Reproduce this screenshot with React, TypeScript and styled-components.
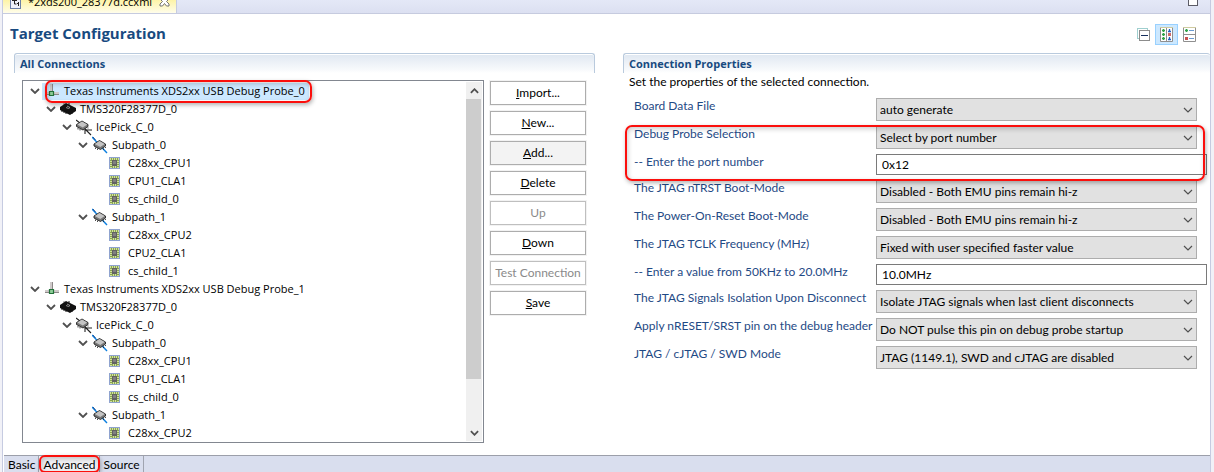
import React, { Fragment, ReactNode } from 'react';
import styled, { createGlobalStyle, css } from 'styled-components';

const ui = `'Open Sans', 'Noto Sans', sans-serif`;
const form = `Lato, 'Open Sans', sans-serif`;

const GlobalStyle = createGlobalStyle`
  *, *::before, *::after { box-sizing: border-box; }
  body { margin: 0; background: #f1f1f7; font: 11px/16px ${ui}; color: #000; }
  button, input, select { font: inherit; color: inherit; margin: 0; border-radius: 0; }
`;

const Editor = styled.main`
  display: flex;
  flex-direction: column;
  min-height: 100vh;
  margin: 0 3px 0 2px;
  background: #fff;
  border: solid #c6cbe1;
  border-width: 0 1px;
`;

const TabBar = styled.header`
  display: flex;
  justify-content: space-between;
  align-items: flex-end;
  height: 14px;
  overflow: hidden;
  background: linear-gradient(#e4e8f7, #dce0f1);
  border-bottom: 1px solid #c6cbdf;
`;

const FileTab = styled.div`
  display: flex;
  align-items: center;
  gap: 7px;
  height: 24px;
  margin-bottom: -1px;
  padding: 0 6px 1px 7px;
  background: linear-gradient(#fdf3a4 40%, #fffef0);
  border-right: 1px solid #c6cbdf;
  svg { flex: none; }
`;

const FileName = styled.span`
  font: 11px/16px ${ui};
`;

const PlainButton = styled.button`
  display: flex;
  padding: 0;
  border: 0;
  background: none;
`;

const MaximizeBox = styled.button`
  width: 10px;
  height: 10px;
  margin: 0 12px 7px 0;
  padding: 0;
  border: 1px solid #5c5c66;
  background: #fff;
`;

const TitleRow = styled.div`
  display: flex;
  align-items: center;
  justify-content: space-between;
  height: 39px;
  padding: 2px 9px 0 7px;
`;

const Title = styled.h1`
  margin: 0 0 4px;
  font: bold 15px/20px ${ui};
  color: #184a80;
`;

const Tools = styled.div`
  display: flex;
  align-items: center;
`;

const ToolButton = styled.button<{ $on?: boolean }>`
  display: flex;
  align-items: center;
  justify-content: center;
  width: 23px;
  height: 21px;
  padding: 0;
  border: 1px solid ${p => (p.$on ? '#99d1ff' : 'transparent')};
  background: ${p => (p.$on ? '#cce8ff' : 'none')};
`;

const Columns = styled.div`
  display: grid;
  grid-template-columns: minmax(0, 581fr) minmax(0, 587fr);
  column-gap: 28px;
  flex: 1;
  padding: 0 0 12px 11px;
`;

const SectionHead = styled.h2<{ $closed?: boolean }>`
  margin: 0;
  height: 20px;
  padding: 2px 5px 0;
  border: 1px solid #b9cadd;
  border-width: 1px ${p => (p.$closed ? '1px' : 0)} 0 1px;
  border-radius: 3px 3px 0 0;
  box-shadow: inset 0 1px #fff;
  background: linear-gradient(#dfe7f1, #f8fafc 16px, #fff);
  font: bold 11px/16px ${ui};
  color: #184a80;
`;

const SplitBody = styled.div`
  display: flex;
  gap: 6px;
  padding: 7px 9px 0 8px;
`;

const TreeBox = styled.div`
  display: flex;
  flex: 1;
  min-width: 0;
  border: 1px solid #828790;
  padding: 1px 1px 0 4px;
`;

const TreeList = styled.ul`
  flex: 1;
  min-width: 0;
  margin: 0;
  padding: 0;
  list-style: none;
`;

const mark = css`
  position: absolute;
  content: '';
  border: 2px solid #fb0f0c;
  border-radius: 7px;
  pointer-events: none;
  box-shadow: 1px 2px 4px rgba(0, 0, 0, 0.3), inset 1px 2px 5px rgba(0, 0, 0, 0.2);
`;

const TreeRow = styled.li<{ $depth: number }>`
  display: flex;
  align-items: center;
  height: 18px;
  padding-left: ${p => p.$depth * 16}px;
  white-space: nowrap;
`;

const Twisty = styled.span`
  display: flex;
  justify-content: center;
  flex: none;
  width: 15px;
`;

const NodeLabel = styled.span<{ $selected?: boolean }>`
  position: relative;
  display: flex;
  align-items: center;
  gap: 4px;
  height: 17px;
  padding: 0 4px 0 2px;
  background: ${p => (p.$selected ? '#cce8ff' : 'none')};
  ${p => p.$selected && css`&::after { ${mark} inset: -3px -3px -3px 3px; }`}
  svg { flex: none; }
`;

const ScrollBar = styled.div`
  display: flex;
  flex-direction: column;
  align-items: center;
  flex: none;
  width: 16px;
  margin-bottom: 1px;
  background: #f0f0f0;
`;

const ScrollArrow = styled.button`
  display: flex;
  align-items: center;
  justify-content: center;
  width: 16px;
  height: 17px;
  padding: 0;
  border: 0;
  background: none;
`;

const ScrollTrack = styled.div`
  flex: 1;
  width: 15px;
  align-self: flex-start;
`;

const ScrollThumb = styled.div`
  height: 86%;
  background: #cdcdcd;
`;

const ButtonColumn = styled.div`
  display: flex;
  flex-direction: column;
  gap: 6px;
  flex: none;
  width: 96px;
  padding-top: 1px;
`;

const PushButton = styled.button<{ $hot?: boolean }>`
  height: 24px;
  padding: 0;
  border: 1px solid #adadad;
  background: ${p => (p.$hot ? '#f3f3f3' : '#fff')};
  box-shadow: 0 0 0 1px #f2f2f2;
  font: 12px/16px ${form};
  white-space: nowrap;
  &:disabled { color: #8a8a8a; border-color: #bfbfbf; }
`;

const Hint = styled.p`
  margin: 0;
  padding: 0 6px;
  font: 12px/18px ${form};
`;

const Properties = styled.form`
  display: flex;
  flex-direction: column;
  gap: 5px;
  margin: 0;
  padding: 7px 3px 0 11px;
  font: 12px/16px ${form};
`;

const MarkedFields = styled.div`
  position: relative;
  display: flex;
  flex-direction: column;
  gap: 5px;
  &::after { ${mark} inset: -1px 2px -6px -9px; }
`;

const Field = styled.div`
  display: grid;
  grid-template-columns: 242px minmax(0, 1fr);
  align-items: start;
`;

const FieldLabel = styled.label`
  color: #1f4a85;
  white-space: nowrap;
`;

const SelectWrap = styled.span`
  display: grid;
  align-items: center;
  margin-right: 10px;
  > * { grid-area: 1 / 1; }
  svg { justify-self: end; margin-right: 4px; pointer-events: none; }
`;

const Select = styled.select`
  appearance: none;
  width: 100%;
  height: 23px;
  padding: 0 20px 0 3px;
  border: 1px solid #adadad;
  background: #e1e1e1;
`;

const TextInput = styled.input`
  width: 100%;
  height: 21px;
  padding: 0 5px;
  border: 1px solid #7a7a7a;
  background: #fff;
`;

const PageTabs = styled.nav`
  display: flex;
  height: 17px;
  margin-left: 1px;
  background: #d9deee;
  border-top: 1px solid #9c9faa;
`;

const PageTab = styled.button<{ $active?: boolean }>`
  position: relative;
  padding: 1px 3px 0 4px;
  border: 0;
  border-right: 1px solid #a0a4b0;
  background: ${p => (p.$active ? '#f2f2f5' : 'none')};
  font: 12px/16px ${form};
  ${p => p.$active && css`&::after { ${mark} inset: -1px -1px -1px 0; border-radius: 6px; }`}
`;

const Chevron = ({ color = '#505050', w = 10, stroke = 1.8, up = false }: { color?: string; w?: number; stroke?: number; up?: boolean }) => (
  <svg width={w} height="6" viewBox="0 0 10 6" fill="none" stroke={color} strokeWidth={stroke}>
    <path d={up ? 'M1 5l4-4 4 4' : 'M1 1l4 4 4-4'} />
  </svg>
);

const ProbeIcon = () => (
  <svg width="16" height="16" viewBox="0 0 16 16">
    <path d="M6 1h3v10H6zM1 9h14v3H1z" fill="#cfcaca" />
    <path d="M8.500 1v8M1 11.500h14" stroke="#8d8888" />
    <path d="M5.500 8.500h4v4h-4z" fill="#8fce98" stroke="#23713a" strokeWidth="1.200" />
  </svg>
);

const DeviceIcon = () => (
  <svg width="16" height="16" viewBox="0 0 16 16">
    <path d="M0 6l6-4 10 5v3l-6 4L0 9z" fill="#111" />
    <path d="M2 9v2M4 10v2M6 11v2M12 12v1M4 2.500v1M9 2v2" stroke="#111" />
    <path d="M7 5l3 1.500-1.500 1-2.500-1" fill="none" stroke="#b0b0b0" strokeWidth=".8" />
  </svg>
);

const Chip = () => (
  <>
    <path d="M2 7.500L7.500 4l6 3.500v2L8.500 13 2 9.500z" fill="#777" stroke="#222" strokeWidth=".9" />
    <path d="M2.800 7.400L7.500 4.600l5.200 3-4.400 2.900z" fill="#c4c4c4" />
    <path d="M3.500 11v1.500M5.500 12v1.500M11.500 12v1.500M13.500 10.500v1" stroke="#222" strokeWidth=".8" />
  </>
);

const RouterIcon = () => (
  <svg width="16" height="18" viewBox="0 0 16 18">
    <path d="M0 2l4 3M7 9l8 8M9 11v5M10 12h6" stroke="#222" strokeWidth="1.100" />
    <g transform="translate(-1.500 -1)"><Chip /></g>
  </svg>
);

const SubpathIcon = () => (
  <svg width="16" height="18" viewBox="0 0 16 18">
    <path d="M0 1l15 16" stroke="#0c7fe0" strokeWidth="1.400" />
    <path d="M1 1l2.500 3" stroke="#123a7a" strokeWidth=".8" />
    <g transform="translate(0 .5)"><Chip /></g>
  </svg>
);

const CoreIcon = () => (
  <svg width="16" height="12" viewBox="-1 0 16 12">
    <rect x=".5" y=".5" width="10" height="11" fill="#d3e29a" stroke="#8fa3cf" />
    <rect x="2" y="2" width="7" height="8" fill="none" stroke="#6f8f3c" strokeWidth="1.500" strokeDasharray="1 1" />
    <rect x="3" y="3" width="5" height="6" fill="#626262" />
    <rect x="4" y="4" width="3" height="3" fill="#808080" />
  </svg>
);

const FileIcon = () => (
  <svg width="11" height="14" viewBox="0 0 11 14">
    <rect x=".5" y=".5" width="10" height="13" fill="#eef2fa" stroke="#6b7fa6" />
    <path d="M2 5.500h5M4.500 4v5h2M8.500 7v4M7 8.500h2" fill="none" stroke="#222" />
  </svg>
);

const CloseIcon = () => (
  <svg width="11" height="11" viewBox="0 0 11 11">
    <path d="M1 1h2.500l2 2.500L7.500 1H10v2L7.500 5.500 10 8v2H7.500l-2-2.500-2 2.500H1V8l2.500-2.500L1 3z" fill="#fff" stroke="#666" strokeWidth=".9" />
  </svg>
);

const CollapseIcon = () => (
  <svg width="13" height="13" viewBox="0 0 13 13">
    <rect x=".5" y=".5" width="10" height="10" fill="#fff" stroke="#9fcfcf" />
    <rect x="2.500" y="2.500" width="10" height="10" fill="#fff" stroke="#8c8c8c" />
    <path d="M4 7.500h7" stroke="#17305e" />
  </svg>
);

const GridIcon = () => (
  <svg width="13" height="15" viewBox="0 0 13 15">
    <path d="M.5.5h12v14H.5zM6.500.5v14" fill="#fff" stroke="#8f8f8f" />
    <path d="M0 .5h13" stroke="#cfcaa0" />
    <path d="M2 3.500h3M3.500 2v3M2 7.500h3M3.500 6v3M2 11.500h3M3.500 10v3" stroke="#2fa347" strokeWidth="1.400" />
    <path d="M9.500 2v2M8 4.500h3M9.500 10v2M8 12.500h3" stroke="#2060c0" strokeWidth="1.300" />
    <rect x="8" y="6" width="3" height="3" fill="#d06a6a" />
  </svg>
);

const ListIcon = () => (
  <svg width="13" height="15" viewBox="0 0 13 15">
    <path d="M.5.5h12v14H.5zM.5 7.500h12" fill="#fff" stroke="#8f8f8f" />
    <path d="M0 .5h13" stroke="#cfcaa0" />
    <path d="M2 3.500h3M3.500 2v3" stroke="#2fa347" strokeWidth="1.400" />
    <path d="M6 3.500h5M6 11.500h5" stroke="#6a9ad0" />
    <rect x="2" y="10" width="3" height="3" fill="#c85050" />
  </svg>
);

type Kind = 'probe' | 'device' | 'router' | 'subpath' | 'core';
const icons: Record<Kind, () => ReactNode> = {
  probe: ProbeIcon, device: DeviceIcon, router: RouterIcon, subpath: SubpathIcon, core: CoreIcon,
};
const depths: Record<Kind, number> = { probe: 0, device: 1, router: 2, subpath: 3, core: 4 };

const nodes: [Kind, string][] = [
  ['probe', 'Texas Instruments XDS2xx USB Debug Probe_0'],
  ['device', 'TMS320F28377D_0'],
  ['router', 'IcePick_C_0'],
  ['subpath', 'Subpath_0'],
  ['core', 'C28xx_CPU1'],
  ['core', 'CPU1_CLA1'],
  ['core', 'cs_child_0'],
  ['subpath', 'Subpath_1'],
  ['core', 'C28xx_CPU2'],
  ['core', 'CPU2_CLA1'],
  ['core', 'cs_child_1'],
  ['probe', 'Texas Instruments XDS2xx USB Debug Probe_1'],
  ['device', 'TMS320F28377D_0'],
  ['router', 'IcePick_C_0'],
  ['subpath', 'Subpath_0'],
  ['core', 'C28xx_CPU1'],
  ['core', 'CPU1_CLA1'],
  ['core', 'cs_child_0'],
  ['subpath', 'Subpath_1'],
  ['core', 'C28xx_CPU2'],
];

const IconSlot = styled.span`
  display: flex;
  align-items: center;
  justify-content: center;
  flex: none;
  width: 16px;
  height: 18px;
`;

const actions: { key?: string; text: string; hot?: boolean; off?: boolean }[] = [
  { key: 'I', text: 'mport...' },
  { key: 'N', text: 'ew...' },
  { key: 'A', text: 'dd...', hot: true },
  { key: 'D', text: 'elete' },
  { text: 'Up', off: true },
  { key: 'D', text: 'own' },
  { text: 'Test Connection', off: true },
  { key: 'S', text: 'ave' },
];

type Prop = { id: string; label: string; value: string; input?: boolean };
const boardFile: Prop = { id: 'board', label: 'Board Data File', value: 'auto generate' };
const probeProps: Prop[] = [
  { id: 'probe', label: 'Debug Probe Selection', value: 'Select by port number' },
  { id: 'port', label: '-- Enter the port number', value: '0x12', input: true },
];
const jtagProps: Prop[] = [
  { id: 'ntrst', label: 'The JTAG nTRST Boot-Mode', value: 'Disabled - Both EMU pins remain hi-z' },
  { id: 'por', label: 'The Power-On-Reset Boot-Mode', value: 'Disabled - Both EMU pins remain hi-z' },
  { id: 'tclk', label: 'The JTAG TCLK Frequency (MHz)', value: 'Fixed with user specified faster value' },
  { id: 'freq', label: '-- Enter a value from 50KHz to 20.0MHz', value: '10.0MHz', input: true },
  { id: 'iso', label: 'The JTAG Signals Isolation Upon Disconnect', value: 'Isolate JTAG signals when last client disconnects' },
  { id: 'reset', label: 'Apply nRESET/SRST pin on the debug header', value: 'Do NOT pulse this pin on debug probe startup' },
  { id: 'mode', label: 'JTAG / cJTAG / SWD Mode', value: 'JTAG (1149.1), SWD and cJTAG are disabled' },
];

const PropertyField = ({ id, label, value, input }: Prop) => (
  <Field>
    <FieldLabel htmlFor={id}>{label}</FieldLabel>
    {input ? (
      <TextInput id={id} type="text" defaultValue={value} />
    ) : (
      <SelectWrap>
        <Select id={id} defaultValue={value}><option>{value}</option></Select>
        <Chevron stroke={1.2} />
      </SelectWrap>
    )}
  </Field>
);

export default function App() {
  return (
    <Fragment>
      <GlobalStyle />
      <Editor>
        <TabBar>
          <FileTab>
            <FileIcon />
            <FileName>*2xds200_28377d.ccxml</FileName>
            <PlainButton aria-label="Close"><CloseIcon /></PlainButton>
          </FileTab>
          <MaximizeBox aria-label="Maximize" />
        </TabBar>
        <TitleRow>
          <Title>Target Configuration</Title>
          <Tools>
            <ToolButton aria-label="Collapse all"><CollapseIcon /></ToolButton>
            <ToolButton $on aria-label="Horizontal layout"><GridIcon /></ToolButton>
            <ToolButton aria-label="Vertical layout"><ListIcon /></ToolButton>
          </Tools>
        </TitleRow>
        <Columns>
          <section>
            <SectionHead $closed>All Connections</SectionHead>
            <SplitBody>
              <TreeBox>
                <TreeList>
                  {nodes.map(([kind, text], i) => {
                    const Icon = icons[kind];
                    return (
                      <TreeRow key={i} $depth={depths[kind]}>
                        <Twisty>{kind !== 'core' && <Chevron />}</Twisty>
                        <NodeLabel $selected={i === 0}>
                          <IconSlot><Icon /></IconSlot>
                          {text}
                        </NodeLabel>
                      </TreeRow>
                    );
                  })}
                </TreeList>
                <ScrollBar>
                  <ScrollArrow aria-label="Scroll up"><Chevron up stroke={2} w={9} /></ScrollArrow>
                  <ScrollTrack><ScrollThumb /></ScrollTrack>
                  <ScrollArrow aria-label="Scroll down"><Chevron stroke={2} w={9} /></ScrollArrow>
                </ScrollBar>
              </TreeBox>
              <ButtonColumn>
                {actions.map(a => (
                  <PushButton key={`${a.key}${a.text}`} $hot={a.hot} disabled={a.off}>
                    {a.key && <u>{a.key}</u>}{a.text}
                  </PushButton>
                ))}
              </ButtonColumn>
            </SplitBody>
          </section>
          <section>
            <SectionHead>Connection Properties</SectionHead>
            <Hint>Set the properties of the selected connection.</Hint>
            <Properties>
              <PropertyField {...boardFile} />
              <MarkedFields>{probeProps.map(p => <PropertyField key={p.id} {...p} />)}</MarkedFields>
              {jtagProps.map(p => <PropertyField key={p.id} {...p} />)}
            </Properties>
          </section>
        </Columns>
        <PageTabs>
          <PageTab>Basic</PageTab>
          <PageTab $active>Advanced</PageTab>
          <PageTab>Source</PageTab>
        </PageTabs>
      </Editor>
    </Fragment>
  );
}
